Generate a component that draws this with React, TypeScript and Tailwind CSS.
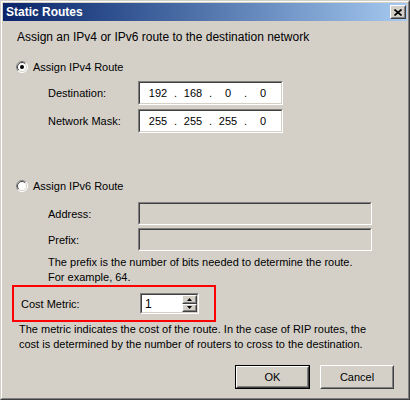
import React from "react";

const font = { fontFamily: '"Liberation Sans", Arial, sans-serif' };

function Radio({ checked }: { checked: boolean }) {
  return (
    <svg width="12" height="12" viewBox="0 0 12 12" className="shrink-0">
      <circle cx="6" cy="6" r="5.5" fill="#ffffff" />
      <path d="M9.9 2.1 A5.5 5.5 0 0 0 2.1 9.9" stroke="#808080" fill="none" strokeWidth="1" />
      <path d="M9.2 2.8 A4.5 4.5 0 0 0 2.8 9.2" stroke="#404040" fill="none" strokeWidth="1" />
      <path d="M2.1 9.9 A5.5 5.5 0 0 0 9.9 2.1" stroke="#ffffff" fill="none" strokeWidth="1" />
      <path d="M2.8 9.2 A4.5 4.5 0 0 0 9.2 2.8" stroke="#d4d0c8" fill="none" strokeWidth="1" />
      {checked && <circle cx="6" cy="6" r="2" fill="#000" />}
    </svg>
  );
}

function Sunken({ className, children }: { className?: string; children?: React.ReactNode }) {
  return (
    <div className={"border border-t-[#808080] border-l-[#808080] border-b-white border-r-white " + (className ?? "")}>
      <div className="h-full w-full border border-t-[#404040] border-l-[#404040] border-b-[#d4d0c8] border-r-[#d4d0c8]">
        {children}
      </div>
    </div>
  );
}

function IpBox({ parts }: { parts: string[] }) {
  return (
    <Sunken className="w-[145px] h-[24px] bg-white shrink-0">
      <div className="flex items-center h-full pl-[6px] text-[11px] text-black">
        <span className="w-[24px] text-center">{parts[0]}</span>
        <span className="w-[11px] text-center">.</span>
        <span className="w-[24px] text-center">{parts[1]}</span>
        <span className="w-[11px] text-center">.</span>
        <span className="w-[24px] text-center">{parts[2]}</span>
        <span className="w-[11px] text-center">.</span>
        <span className="w-[24px] text-center">{parts[3]}</span>
      </div>
    </Sunken>
  );
}

function Raised({ className, children }: { className?: string; children?: React.ReactNode }) {
  return (
    <div className={"border border-t-white border-l-white border-b-[#404040] border-r-[#404040] bg-[#d4d0c8] " + (className ?? "")}>
      <div className="h-full w-full border border-t-[#d4d0c8] border-l-[#d4d0c8] border-b-[#808080] border-r-[#808080] flex items-center justify-center">
        {children}
      </div>
    </div>
  );
}

export default function App() {
  return (
    <div style={font} className="w-[410px] h-[400px] bg-[#d4d0c8] text-black text-[11px] leading-[14px] overflow-hidden">
      <div className="h-full w-full border border-t-[#d4d0c8] border-l-[#d4d0c8] border-b-[#404040] border-r-[#404040]">
        <div className="h-full w-full border border-t-white border-l-white border-b-[#808080] border-r-[#808080] p-px flex flex-col">
          {/* Title bar */}
          <div className="h-[18px] shrink-0 bg-gradient-to-r from-[#0a246a] to-[#a6caf0] flex items-center pl-[3px] pr-[1px]">
            <span className="text-white font-bold text-[12px] leading-[16px] flex-1">Static Routes</span>
            <Raised className="w-[16px] h-[14px]">
              <svg width="8" height="7" viewBox="0 0 8 7">
                <path d="M0.5 0.5 L7.5 6.5 M7.5 0.5 L0.5 6.5" stroke="#000" strokeWidth="1.6" />
              </svg>
            </Raised>
          </div>

          {/* Body */}
          <div className="flex flex-col pl-[13px] pr-[13px]">
            <div className="mt-[9px] pl-[1px] text-[12px] whitespace-nowrap">Assign an IPv4 or IPv6 route to the destination network</div>

            <div className="mt-[16px] h-[14px] flex items-center gap-[5px]">
              <Radio checked />
              <span>Assign IPv4 Route</span>
            </div>

            <div className="mt-[7px] flex items-center">
              <span className="w-[122px] pl-[32px]">Destination:</span>
              <IpBox parts={["192", "168", "0", "0"]} />
            </div>
            <div className="mt-[4px] flex items-center">
              <span className="w-[122px] pl-[32px]">Network Mask:</span>
              <IpBox parts={["255", "255", "255", "0"]} />
            </div>

            <div className="mt-[46px] h-[14px] flex items-center gap-[5px]">
              <Radio checked={false} />
              <span>Assign IPv6 Route</span>
            </div>

            <div className="mt-[9px] flex items-center">
              <span className="w-[122px] pl-[32px]">Address:</span>
              <Sunken className="w-[234px] h-[23px] bg-[#d4d0c8]" />
            </div>
            <div className="mt-[3px] flex items-center">
              <span className="w-[122px] pl-[32px]">Prefix:</span>
              <Sunken className="w-[234px] h-[23px] bg-[#d4d0c8]" />
            </div>

            <div className="mt-[4px] pl-[32px] leading-[15px] whitespace-nowrap">
              The prefix is the number of bits needed to determine the route.
              <br />
              For example, 64.
            </div>

            <div className="mt-[0px] -ml-[4px] w-[204px] h-[37px] border-2 border-[#ff0000] flex items-center pl-[7px]">
              <span className="w-[119px]">Cost Metric:</span>
              <Sunken className="w-[59px] h-[21px] bg-white">
                <div className="flex h-full">
                  <div className="flex-1 pl-[3px] flex items-center text-[12px]">1</div>
                  <div className="w-[15px] flex flex-col">
                    <Raised className="h-1/2 w-full">
                      <svg width="5" height="3" viewBox="0 0 5 3"><path d="M2.5 0 L5 3 L0 3 Z" fill="#000" /></svg>
                    </Raised>
                    <Raised className="h-1/2 w-full">
                      <svg width="5" height="3" viewBox="0 0 5 3"><path d="M0 0 L5 0 L2.5 3 Z" fill="#000" /></svg>
                    </Raised>
                  </div>
                </div>
              </Sunken>
            </div>

            <div className="mt-[0px] pl-[3px] leading-[15px] whitespace-nowrap">
              The metric indicates the cost of the route. In the case of RIP routes, the
              <br />
              cost is determined by the number of routers to cross to the destination.
            </div>

            <div className="mt-[13px] flex justify-end gap-[10px]">
              <div className="border border-black">
                <Raised className="w-[73px] h-[22px]">OK</Raised>
              </div>
              <Raised className="w-[74px] h-[24px]">Cancel</Raised>
            </div>
          </div>
        </div>
      </div>
    </div>
  );
}
